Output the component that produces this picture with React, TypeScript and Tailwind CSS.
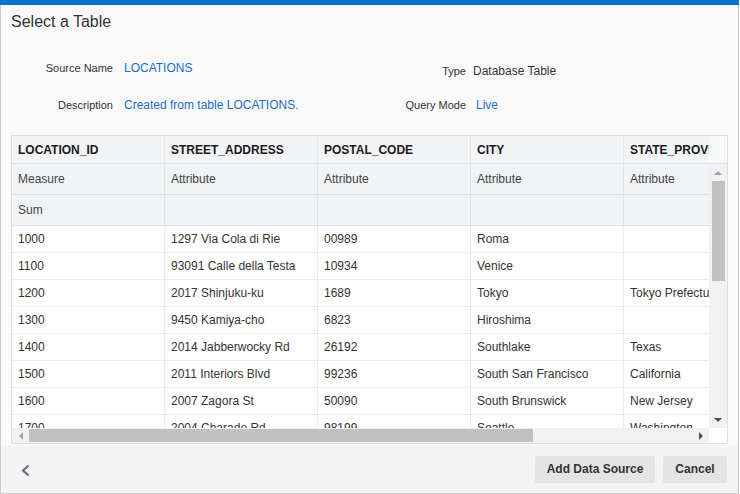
import React from 'react';

const columns = ['LOCATION_ID', 'STREET_ADDRESS', 'POSTAL_CODE', 'CITY', 'STATE_PROVINCE'];
const kinds = ['Measure', 'Attribute', 'Attribute', 'Attribute', 'Attribute'];
const aggs = ['Sum', '', '', '', ''];

const rows: string[][] = [
  ['1000', '1297 Via Cola di Rie', '00989', 'Roma', ''],
  ['1100', '93091 Calle della Testa', '10934', 'Venice', ''],
  ['1200', '2017 Shinjuku-ku', '1689', 'Tokyo', 'Tokyo Prefecture'],
  ['1300', '9450 Kamiya-cho', '6823', 'Hiroshima', ''],
  ['1400', '2014 Jabberwocky Rd', '26192', 'Southlake', 'Texas'],
  ['1500', '2011 Interiors Blvd', '99236', 'South San Francisco', 'California'],
  ['1600', '2007 Zagora St', '50090', 'South Brunswick', 'New Jersey'],
  ['1700', '2004 Charade Rd', '98199', 'Seattle', 'Washington'],
];

function Arrow({ dir, color }: { dir: 'up' | 'down' | 'left' | 'right'; color: string }) {
  const pts = {
    up: '0,4 4,0 8,4',
    down: '0,0 8,0 4,4',
    left: '4,0 4,8 0,4',
    right: '0,0 4,4 0,8',
  }[dir];
  const vertical = dir === 'up' || dir === 'down';
  return (
    <svg width={vertical ? 8 : 4} height={vertical ? 4 : 8} viewBox={vertical ? '0 0 8 4' : '0 0 4 8'}>
      <polygon points={pts} fill={color} />
    </svg>
  );
}

function Field({ label, value, link, labelW, gap }: { label: string; value: string; link?: boolean; labelW: string; gap: string }) {
  return (
    <div className="flex items-baseline">
      <span className={`${labelW} text-right text-[11px] text-[#333]`}>{label}</span>
      <span className={`${gap} text-[12px] ${link ? 'text-[#1a6ec8]' : 'text-[#333]'}`}>{value}</span>
    </div>
  );
}

export default function App() {
  return (
    <div className="w-[740px] h-[494px] bg-white font-['Liberation_Sans',Arial,sans-serif]">
      <div className="w-[739px] h-[494px] flex flex-col">
        {/* Accent bar */}
        <div className="h-[5px] bg-[#0572ce]" />

        <div className="flex-1 flex flex-col bg-[#fafafa] border-x border-b border-[#c6cdd5]">
          {/* Title */}
          <h1 className="pl-[10px] pt-[7px] text-[16px] leading-[20px] text-[#333]">Select a Table</h1>

          {/* Properties */}
          <div className="mt-[28px] flex h-[16px] leading-[16px]">
            <div className="w-[354px]">
              <Field label="Source Name" value="LOCATIONS" link labelW="w-[112px]" gap="ml-[11px]" />
            </div>
            <div className="mt-[3px]">
              <Field label="Type" value="Database Table" labelW="w-[111px]" gap="ml-[7px]" />
            </div>
          </div>
          <div className="mt-[21px] flex h-[16px] leading-[16px]">
            <div className="w-[354px]">
              <Field label="Description" value="Created from table LOCATIONS." link labelW="w-[112px]" gap="ml-[11px]" />
            </div>
            <div>
              <Field label="Query Mode" value="Live" link labelW="w-[111px]" gap="ml-[10px]" />
            </div>
          </div>

          {/* Table */}
          <div className="mt-[22px] ml-[10px] w-[717px] h-[309px] border border-[#d8dee5] flex flex-col bg-white">
            {/* Header */}
            <div className="flex h-[28px] border-b border-[#dbe1e8]">
              <div className="w-[697px] flex overflow-hidden bg-[#f2f4f7]">
                {columns.map((c) => (
                  <div
                    key={c}
                    className="w-[153px] shrink-0 px-[6px] flex items-center border-r border-[#e4e8ed] text-[12px] font-bold text-[#1b1b1b] whitespace-nowrap overflow-hidden"
                  >
                    {c}
                  </div>
                ))}
              </div>
              <div className="flex-1 bg-[#f7f8fa]" />
            </div>

            {/* Body */}
            <div className="flex h-[264px]">
              <div className="w-[697px] overflow-hidden">
                <div className="flex h-[31px] border-b border-[#dbe1e8] bg-[#f1f3f6]">
                  {kinds.map((k, i) => (
                    <div key={i} className="w-[153px] shrink-0 px-[6px] flex items-center border-r border-[#dfe3e8] text-[12px] text-[#444]">
                      {k}
                    </div>
                  ))}
                </div>
                <div className="flex h-[31px] border-b border-[#dbe1e8] bg-[#f1f3f6]">
                  {aggs.map((k, i) => (
                    <div key={i} className="w-[153px] shrink-0 px-[6px] flex items-center border-r border-[#dfe3e8] text-[12px] text-[#444]">
                      {k}
                    </div>
                  ))}
                </div>
                {rows.map((r) => (
                  <div key={r[0]} className="flex h-[27px] border-b border-[#ececec]">
                    {r.map((v, i) => (
                      <div
                        key={i}
                        className="w-[153px] shrink-0 px-[6px] flex items-center border-r border-[#ececec] text-[12px] text-[#333] whitespace-nowrap overflow-hidden"
                      >
                        {v}
                      </div>
                    ))}
                  </div>
                ))}
              </div>
              {/* Vertical scrollbar */}
              <div className="flex-1 bg-[#f1f1f1] flex flex-col items-center">
                <div className="h-[17px] flex items-center justify-center">
                  <Arrow dir="up" color="#a3a3a3" />
                </div>
                <div className="w-[13px] h-[100px] bg-[#c1c1c1]" />
                <div className="flex-1" />
                <div className="h-[17px] flex items-center justify-center">
                  <Arrow dir="down" color="#505050" />
                </div>
              </div>
            </div>

            {/* Horizontal scrollbar */}
            <div className="flex flex-1">
              <div className="w-[697px] bg-[#f1f1f1] flex items-center">
                <div className="w-[17px] flex justify-center">
                  <Arrow dir="left" color="#a3a3a3" />
                </div>
                <div className="w-[504px] h-[13px] bg-[#c1c1c1]" />
                <div className="flex-1" />
                <div className="w-[17px] flex justify-center">
                  <Arrow dir="right" color="#505050" />
                </div>
              </div>
              <div className="flex-1 bg-white" />
            </div>
          </div>

          {/* Footer */}
          <div className="mt-px flex-1 bg-[#f4f4f4] flex items-center pl-[19px] pr-[11px]">
            <svg width="11" height="13" viewBox="0 0 11 13" className="mt-[3px]">
              <polyline points="8.5,1.5 3,6.5 8.5,11.5" fill="none" stroke="#6b6a8e" strokeWidth="2.2" />
            </svg>
            <div className="ml-auto flex gap-[8px]">
              <button className="w-[120px] h-[27px] rounded-[2px] bg-[#e4e4e4] text-[12px] font-bold text-[#333]">
                Add Data Source
              </button>
              <button className="w-[64px] h-[27px] rounded-[2px] bg-[#e4e4e4] text-[12px] font-bold text-[#333]">
                Cancel
              </button>
            </div>
          </div>
        </div>
      </div>
    </div>
  );
}
